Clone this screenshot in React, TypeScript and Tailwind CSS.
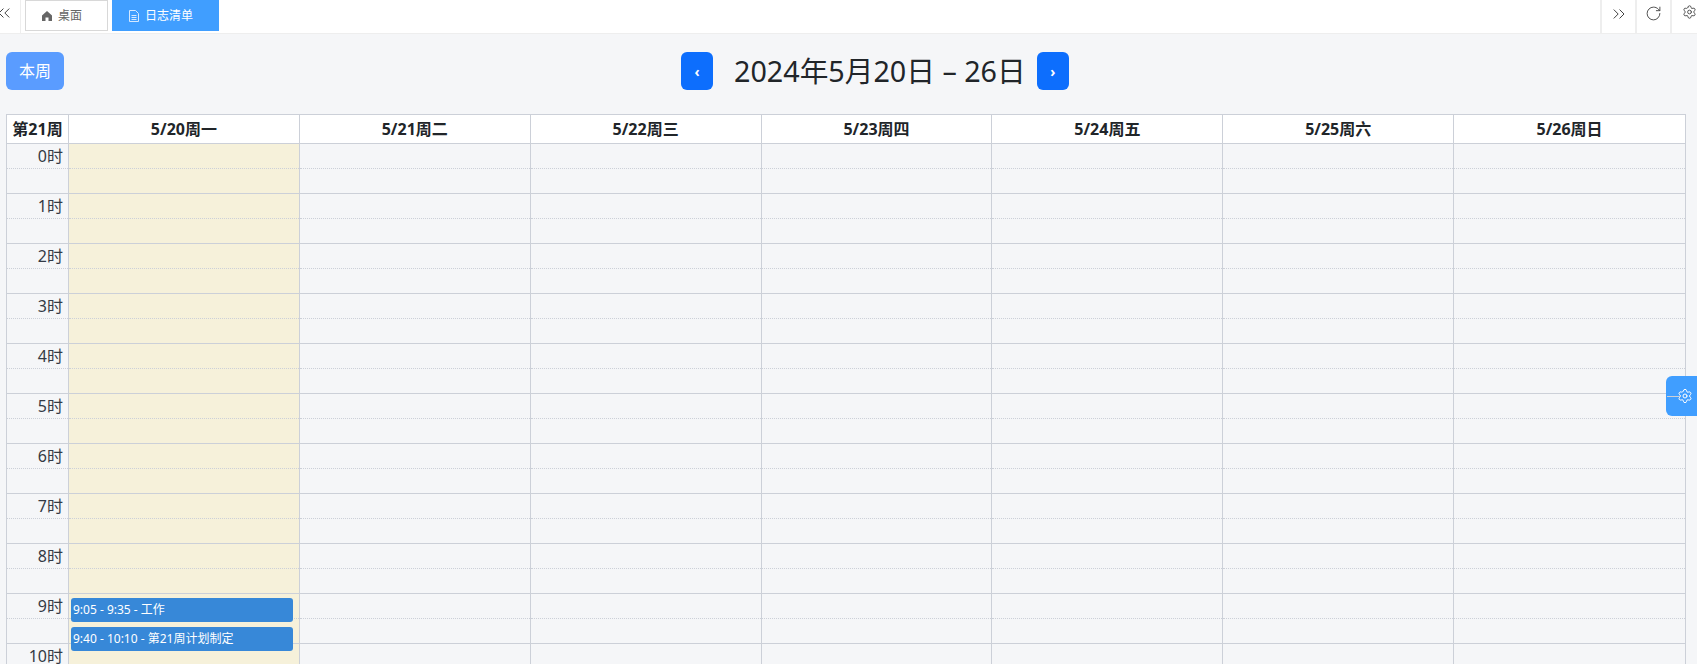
import { ChevronsLeft, ChevronsRight, RotateCw, Settings } from "lucide-react";

const days = ["5/20周一", "5/21周二", "5/22周三", "5/23周四", "5/24周五", "5/25周六", "5/26周日"];
const hours = [0, 1, 2, 3, 4, 5, 6, 7, 8, 9, 10];
const font = "font-['Noto_Sans','Noto_Sans_CJK_SC',sans-serif]";

function ToolBtn({ children, last }: { children: React.ReactNode; last?: boolean }) {
  return (
    <div className={`h-[33px] flex items-start border-l-2 border-[#eeeeee] text-[#444] shrink-0 ${last ? "w-[27px] pl-[10px] pt-[4px]" : "w-[35px] justify-center pt-[4px]"}`}>
      {children}
    </div>
  );
}

function HourRow({ hour }: { hour: number }) {
  return (
    <div className="grid grid-cols-[62px_repeat(7,1fr)] h-[50px] border-b border-[#ccd0d8]">
      <div className="border-r border-[#ccd0d8] flex flex-col">
        <div className="h-[25px] border-b border-dotted border-[#ccd0d8] text-right pr-[5px] text-[16px] leading-[24px] text-[#333a45]">
          {hour}时
        </div>
      </div>
      {days.map((d, i) => (
        <div key={d} className={`relative border-r border-[#ccd0d8] last:border-r-0 ${i === 0 ? "bg-[#f6f1da]" : ""}`}>
          <div className="h-[25px] border-b border-dotted border-[#ccd0d8]" />
          {i === 0 && hour === 9 && (
            <>
              <div className="absolute left-[2px] right-[6px] top-[4px] h-[24px] rounded-[3px] bg-[#3788d8] text-white text-[12px] leading-[23px] pl-[2px] whitespace-nowrap z-10">
                9:05 - 9:35 - 工作
              </div>
              <div className="absolute left-[2px] right-[6px] top-[33px] h-[24px] rounded-[3px] bg-[#3788d8] text-white text-[12px] leading-[23px] pl-[2px] whitespace-nowrap z-10">
                9:40 - 10:10 - 第21周计划制定
              </div>
            </>
          )}
        </div>
      ))}
    </div>
  );
}

export default function App() {
  return (
    <div className={`relative h-[664px] overflow-hidden bg-[#f5f6f8] text-[#212529] ${font}`}>
      {/* top tabs */}
      <div className="flex h-[34px] items-start bg-white border-b border-[#eeeeee]">
        <div className="w-[21px] h-[33px] border-r border-[#eeeeee] text-[#444] shrink-0 pt-[3px] overflow-hidden">
          <ChevronsLeft size={20} strokeWidth={1.2} className="-ml-[6px]" />
        </div>
        <div className="ml-[4px] w-[83px] h-[31px] border border-[#d8d8d8] flex items-center pl-[16px] gap-[6px] text-[12px] text-[#666]">
          <svg width="10" height="10" viewBox="0 0 10 10" fill="#666">
            <path d="M5 0 L10 4.6 V10 H6.5 V6.5 H3.5 V10 H0 V4.6 Z" />
          </svg>
          <span>桌面</span>
        </div>
        <div className="ml-[4px] w-[107px] h-[31px] bg-[#409eff] flex items-center pl-[17px] gap-[6px] text-[12px] text-white">
          <svg width="10" height="12" viewBox="0 0 10 12" fill="none" stroke="#d6e9ff" strokeWidth="1">
            <path d="M0.5 0.5 H6.5 L9.5 3.5 V11.5 H0.5 Z" />
            <path d="M2.5 5.5 H7.5 M2.5 7.5 H7.5 M2.5 9.5 H7.5" />
          </svg>
          <span>日志清单</span>
        </div>
        <div className="ml-auto flex">
          <ToolBtn><ChevronsRight size={20} strokeWidth={1.2} /></ToolBtn>
          <ToolBtn><RotateCw size={17} strokeWidth={1.3} className="mt-[1px]" /></ToolBtn>
          <ToolBtn last><Settings size={16} strokeWidth={1.4} /></ToolBtn>
        </div>
      </div>

      {/* toolbar */}
      <div className="grid grid-cols-[675px_auto_1fr] items-center px-[6px] h-[38px] mt-[18px] mb-[24px]">
        <button className="justify-self-start w-[58px] h-[38px] rounded-[6px] bg-[#5a9cff] text-white text-[16px]">本周</button>
        <div className="flex items-center">
          <button className="w-[32px] h-[38px] rounded-[6px] bg-[#0d6efd] text-white text-[14px] font-bold">‹</button>
          <div className="ml-[21px] mr-[11px] text-[28.7px] leading-[38px] whitespace-nowrap">2024年5月20日 – 26日</div>
          <button className="w-[32px] h-[38px] rounded-[6px] bg-[#0d6efd] text-white text-[14px] font-bold">›</button>
        </div>
        <div />
      </div>

      {/* week grid */}
      <div className="ml-[6px] mr-[11px] border-x border-t border-[#ccd0d8]">
        <div className="grid grid-cols-[62px_repeat(7,1fr)] h-[29px] bg-white border-b border-[#ccd0d8] font-bold text-[16px] leading-[28px] text-center">
          <div className="border-r border-[#ccd0d8] whitespace-nowrap">第21周</div>
          {days.map((d) => (
            <div key={d} className="border-r border-[#ccd0d8] last:border-r-0">{d}</div>
          ))}
        </div>
        {hours.map((h) => <HourRow key={h} hour={h} />)}
      </div>

      {/* floating settings */}
      <div className="absolute right-0 top-[376px] w-[31px] h-[40px] rounded-l-[6px] bg-[#409eff] flex items-center justify-end pr-[4px] text-white">
        <div className="absolute left-[1px] w-[14px] h-px bg-[#ccd0d8]" />
        <Settings size={16} strokeWidth={1.5} />
      </div>
    </div>
  );
}
